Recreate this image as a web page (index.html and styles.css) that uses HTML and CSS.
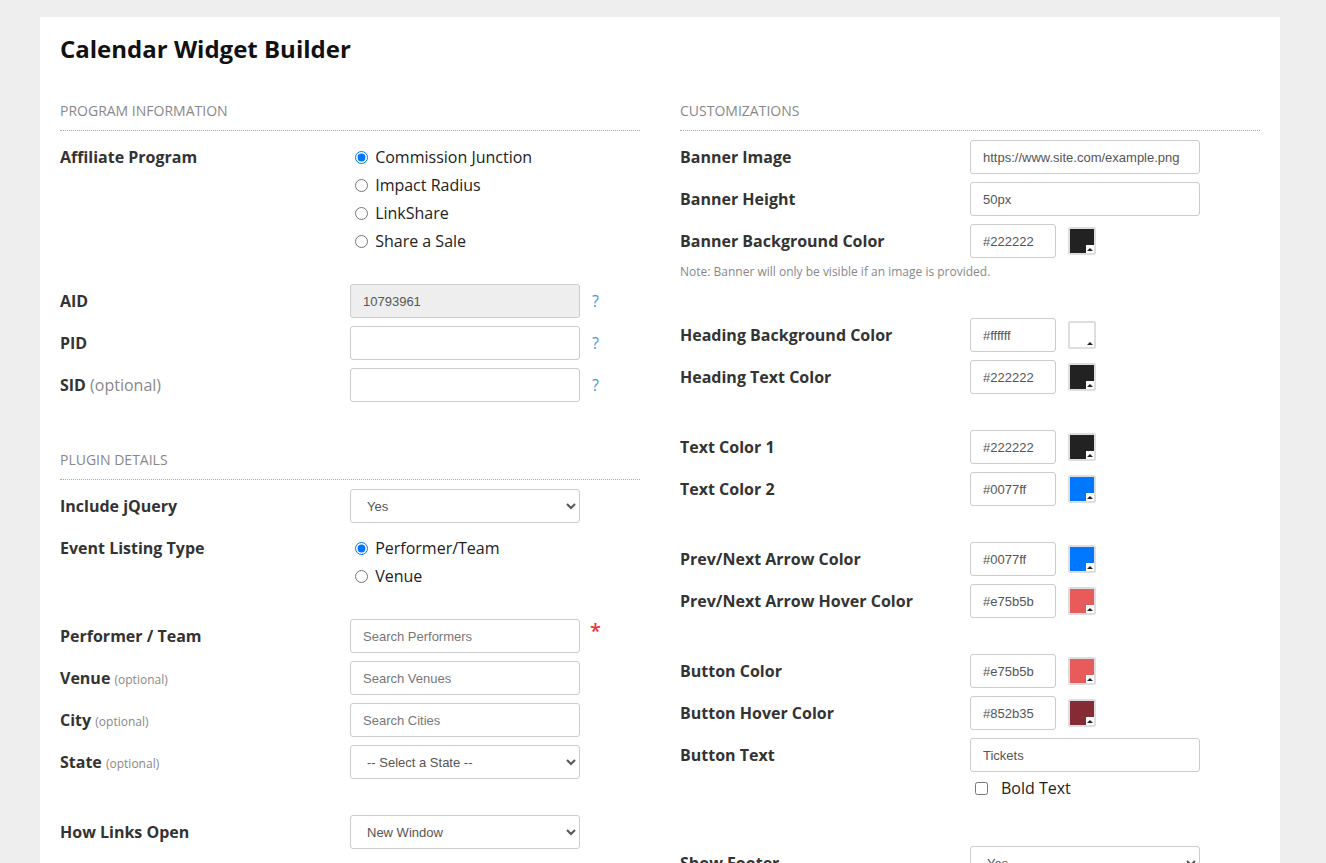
FILE: index.html
```html
<!DOCTYPE html>
<html lang="en">
<head>
<meta charset="utf-8">
<title>Calendar Widget Builder</title>
<link rel="stylesheet" href="styles.css">
</head>
<body>
<div class="card">
  <h1 class="title">Calendar Widget Builder</h1>
  <div class="columns">
    <section class="col">
      <h2 class="section-head">Program Information</h2>
      <div class="row row-radio">
        <div class="label">Affiliate Program</div>
        <div class="control radio-list">
          <label class="radio"><input type="radio" name="aff" checked> Commission Junction</label>
          <label class="radio"><input type="radio" name="aff"> Impact Radius</label>
          <label class="radio"><input type="radio" name="aff"> LinkShare</label>
          <label class="radio"><input type="radio" name="aff"> Share a Sale</label>
        </div>
      </div>
      <div class="row">
        <div class="label">AID</div>
        <div class="control"><input class="text disabled" type="text" value="10793961" readonly><span class="help">?</span></div>
      </div>
      <div class="row">
        <div class="label">PID</div>
        <div class="control"><input class="text" type="text"><span class="help">?</span></div>
      </div>
      <div class="row">
        <div class="label">SID <span class="opt-big">(optional)</span></div>
        <div class="control"><input class="text" type="text"><span class="help">?</span></div>
      </div>

      <h2 class="section-head section-gap">Plugin Details</h2>
      <div class="row">
        <div class="label">Include jQuery</div>
        <div class="control"><select class="select"><option>Yes</option><option>No</option></select></div>
      </div>
      <div class="row row-radio">
        <div class="label">Event Listing Type</div>
        <div class="control radio-list">
          <label class="radio"><input type="radio" name="type" checked> Performer/Team</label>
          <label class="radio"><input type="radio" name="type"> Venue</label>
        </div>
      </div>
      <div class="row">
        <div class="label">Performer / Team</div>
        <div class="control"><input class="text" type="text" placeholder="Search Performers"><span class="required">*</span></div>
      </div>
      <div class="row">
        <div class="label">Venue <span class="opt">(optional)</span></div>
        <div class="control"><input class="text" type="text" placeholder="Search Venues"></div>
      </div>
      <div class="row">
        <div class="label">City <span class="opt">(optional)</span></div>
        <div class="control"><input class="text" type="text" placeholder="Search Cities"></div>
      </div>
      <div class="row">
        <div class="label">State <span class="opt">(optional)</span></div>
        <div class="control"><select class="select"><option>-- Select a State --</option></select></div>
      </div>
      <div class="row gap">
        <div class="label">How Links Open</div>
        <div class="control"><select class="select"><option>New Window</option><option>Same Window</option></select></div>
      </div>
      <div class="row gap">
        <div class="label">Widget Width</div>
        <div class="control"><input class="text" type="text" value="100%"></div>
      </div>
    </section>

    <section class="col">
      <h2 class="section-head">Customizations</h2>
      <div class="row">
        <div class="label">Banner Image</div>
        <div class="control"><input class="text" type="text" value="https://www.site.com/example.png"></div>
      </div>
      <div class="row">
        <div class="label">Banner Height</div>
        <div class="control"><input class="text" type="text" value="50px"></div>
      </div>
      <div class="row row-tight">
        <div class="label">Banner Background Color</div>
        <div class="control"><input class="text hex" type="text" value="#222222"><span class="swatch c-222"></span></div>
      </div>
      <p class="note">Note: Banner will only be visible if an image is provided.</p>

      <div class="row">
        <div class="label">Heading Background Color</div>
        <div class="control"><input class="text hex" type="text" value="#ffffff"><span class="swatch c-fff"></span></div>
      </div>
      <div class="row">
        <div class="label">Heading Text Color</div>
        <div class="control"><input class="text hex" type="text" value="#222222"><span class="swatch c-222"></span></div>
      </div>

      <div class="row gap">
        <div class="label">Text Color 1</div>
        <div class="control"><input class="text hex" type="text" value="#222222"><span class="swatch c-222"></span></div>
      </div>
      <div class="row">
        <div class="label">Text Color 2</div>
        <div class="control"><input class="text hex" type="text" value="#0077ff"><span class="swatch c-07f"></span></div>
      </div>

      <div class="row gap">
        <div class="label">Prev/Next Arrow Color</div>
        <div class="control"><input class="text hex" type="text" value="#0077ff"><span class="swatch c-07f"></span></div>
      </div>
      <div class="row">
        <div class="label">Prev/Next Arrow Hover Color</div>
        <div class="control"><input class="text hex" type="text" value="#e75b5b"><span class="swatch c-e75"></span></div>
      </div>

      <div class="row gap">
        <div class="label">Button Color</div>
        <div class="control"><input class="text hex" type="text" value="#e75b5b"><span class="swatch c-e75"></span></div>
      </div>
      <div class="row">
        <div class="label">Button Hover Color</div>
        <div class="control"><input class="text hex" type="text" value="#852b35"><span class="swatch c-852"></span></div>
      </div>
      <div class="row">
        <div class="label">Button Text</div>
        <div class="control control-stack">
          <input class="text" type="text" value="Tickets">
          <label class="check"><input type="checkbox"> <span>Bold Text</span></label>
        </div>
      </div>

      <div class="row gap-lg">
        <div class="label">Show Footer</div>
        <div class="control"><select class="select"><option>Yes</option><option>No</option></select></div>
      </div>
    </section>
  </div>
</div>
</body>
</html>
```

FILE: styles.css
```css
* { box-sizing: border-box; }

html, body {
  margin: 0;
  padding: 0;
  background: #eeeeee;
  font-family: "Open Sans", "Liberation Sans", Arial, sans-serif;
  color: #333;
}

.card {
  width: 1240px;
  margin: 17px 0 0 40px;
  background: #fff;
  padding: 16px 20px 40px;
}

.title {
  margin: 0 0 36px;
  font-size: 24px;
  line-height: 32px;
  font-weight: 700;
  color: #111;
}

.columns {
  display: flex;
  gap: 40px;
  align-items: flex-start;
}

.col {
  width: 580px;
  flex: none;
}

.section-head {
  margin: 0 0 9px;
  padding-bottom: 9px;
  border-bottom: 1px dotted #aaa;
  font-size: 14px;
  line-height: 20px;
  font-weight: 400;
  text-transform: uppercase;
  color: #888;
}

.section-gap { margin-top: 48px; }

.row {
  display: flex;
  align-items: flex-start;
  margin-bottom: 8px;
}

.row.gap { margin-top: 36px; }
.row.gap-lg { margin-top: 46px; }

.row-radio { margin-bottom: 29px; }

.label {
  width: 290px;
  flex: none;
  height: 34px;
  font-size: 16px;
  line-height: 34px;
  font-weight: 700;
  color: #333;
}

.opt-big {
  font-weight: 400;
  color: #888;
}

.opt {
  font-size: 12px;
  line-height: 1;
  font-weight: 400;
  color: #888;
}

.control {
  display: flex;
  align-items: center;
}

.control-stack {
  flex-direction: column;
  align-items: flex-start;
}

.radio-list {
  flex-direction: column;
  align-items: flex-start;
  padding-top: 3px;
}

.radio {
  display: flex;
  align-items: center;
  height: 28px;
  font-size: 16px;
  color: #222;
  white-space: pre;
}

.radio input {
  width: 13px;
  height: 13px;
  margin: 0 3px 0 5px;
}

.text, .select {
  width: 230px;
  height: 34px;
  border: 1px solid #ccc;
  border-radius: 3px;
  padding: 0 12px;
  font-family: "Liberation Sans", Arial, sans-serif;
  font-size: 13px;
  color: #555;
  background: #fff;
  outline: none;
}

.text::placeholder { color: #777; }

.text.disabled { background: #eee; }

.text.hex { width: 86px; }

.select { padding-left: 12px; }

.help {
  margin-left: 12px;
  font-size: 16px;
  color: #3a9ad9;
  line-height: 34px;
}

.required {
  align-self: flex-start;
  margin-left: 10px;
  font-size: 20px;
  line-height: 20px;
  margin-top: 2px;
  color: #e4393a;
  font-weight: 600;
}

.swatch {
  position: relative;
  width: 28px;
  height: 28px;
  margin-left: 12px;
  border: 2px solid #dcdee1;
  border-radius: 2px;
}

.swatch::before {
  content: "";
  position: absolute;
  right: 0;
  bottom: 0;
  width: 8px;
  height: 8px;
  background: #fff;
}

.swatch::after {
  content: "";
  position: absolute;
  right: 1px;
  bottom: 2px;
  width: 0;
  height: 0;
  border-left: 3px solid transparent;
  border-right: 3px solid transparent;
  border-bottom: 3px solid #222;
}

.c-222 { background: #222222; }
.c-fff { background: #ffffff; }
.c-07f { background: #0077ff; }
.c-e75 { background: #e75b5b; }
.c-852 { background: #852b35; }

.row-tight { margin-bottom: 6px; }

.note {
  margin: 0 0 38px;
  font-size: 12px;
  line-height: 16px;
  color: #888;
}

.check {
  display: flex;
  align-items: center;
  height: 24px;
  margin-top: 4px;
  font-size: 16px;
  color: #222;
}

.check input {
  width: 13px;
  height: 13px;
  margin: 0 3px 0 5px;
}

.check span { padding-left: 10px; }
```
